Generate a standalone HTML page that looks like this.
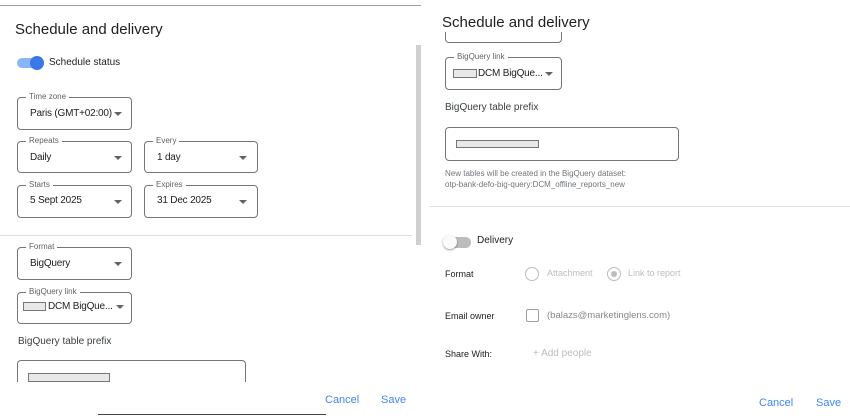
<!DOCTYPE html>
<html><head><meta charset="utf-8"><style>
body{margin:0;width:850px;height:419px;background:#fff;position:relative;overflow:hidden;font-family:"Liberation Sans",Arial,sans-serif;color:#202124}
.a{position:absolute;white-space:nowrap}
.box{position:absolute;border:1px solid #757575;border-radius:4px;box-sizing:border-box}
.lbl{position:absolute;top:-6px;left:8px;background:#fff;padding:0 3px;font-size:8px;color:#5f6368;line-height:10px}
.val{position:absolute;left:12px;font-size:10px;line-height:12px;letter-spacing:-0.2px}
.arr{position:absolute;width:0;height:0;border-left:4px solid transparent;border-right:4px solid transparent;border-top:4px solid #5f6368}
.t{font-size:15px;color:#202124}
.s{font-size:10px}
.g{position:absolute;background:#e8e8e8;border:1px solid #777;box-sizing:border-box}
.btn{font-size:11px;color:#4285f4}
</style></head><body>
<!-- left panel -->
<div class="a" style="left:0;top:5px;width:421px;height:1px;background:#9e9e9e"></div>
<div class="a t" style="left:15px;top:21px">Schedule and delivery</div>
<div class="a" style="left:416px;top:45px;width:5px;height:200px;background:#d0d0d0"></div>
<div class="a" style="left:17px;top:58px;width:25px;height:10px;border-radius:5px;background:#8ab4f8"></div>
<div class="a" style="left:30px;top:56px;width:14px;height:14px;border-radius:50%;background:#3b78e7"></div>
<div class="a s" style="left:49px;top:57px">Schedule status</div>

<div class="box" style="left:17px;top:97px;width:115px;height:33px"><span class="lbl">Time zone</span><span class="val" style="top:10px">Paris (GMT+02:00)</span><span class="arr" style="left:96px;top:14px"></span></div>
<div class="box" style="left:17px;top:141px;width:115px;height:32px"><span class="lbl">Repeats</span><span class="val" style="top:10px">Daily</span><span class="arr" style="left:96px;top:14px"></span></div>
<div class="box" style="left:144px;top:141px;width:114px;height:32px"><span class="lbl">Every</span><span class="val" style="top:10px">1 day</span><span class="arr" style="left:94px;top:14px"></span></div>
<div class="box" style="left:17px;top:185px;width:115px;height:33px"><span class="lbl">Starts</span><span class="val" style="top:9px">5 Sept 2025</span><span class="arr" style="left:96px;top:14px"></span></div>
<div class="box" style="left:144px;top:185px;width:114px;height:33px"><span class="lbl">Expires</span><span class="val" style="top:9px">31 Dec 2025</span><span class="arr" style="left:94px;top:14px"></span></div>
<div class="a" style="left:0;top:235px;width:412px;height:1px;background:#ddd"></div>
<div class="box" style="left:17px;top:247px;width:115px;height:33px"><span class="lbl">Format</span><span class="val" style="top:10px">BigQuery</span><span class="arr" style="left:96px;top:14px"></span></div>
<div class="box" style="left:17px;top:292px;width:115px;height:32px"><span class="lbl">BigQuery link</span><span class="g" style="left:5px;top:9px;width:23px;height:9px"></span><span class="val" style="left:30px;top:8px">DCM BigQue...</span><span class="arr" style="left:98px;top:12px"></span></div>
<div class="a s" style="left:18px;top:336px;color:#3c4043">BigQuery table prefix</div>
<div class="a" style="left:17px;top:360px;width:229px;height:22px;border:1px solid #757575;border-bottom:none;border-radius:4px 4px 0 0;box-sizing:border-box"></div>
<div class="g" style="left:28px;top:373px;width:82px;height:9px"></div>
<div class="a btn" style="left:325px;top:394px">Cancel</div>
<div class="a btn" style="left:381px;top:394px">Save</div>
<div class="a" style="left:98px;top:414px;width:228px;height:1px;background:#444"></div>

<!-- right panel -->
<div class="a t" style="left:442px;top:14px">Schedule and delivery</div>
<div class="a" style="left:445px;top:32px;width:117px;height:11px;border:1px solid #757575;border-top:none;border-radius:0 0 4px 4px;box-sizing:border-box"></div>
<div class="box" style="left:445px;top:57px;width:117px;height:33px"><span class="lbl">BigQuery link</span><span class="g" style="left:7px;top:11px;width:24px;height:9px"></span><span class="val" style="left:32px;top:10px">DCM BigQue...</span><span class="arr" style="left:99px;top:14px"></span></div>
<div class="a s" style="left:445px;top:102px;color:#3c4043">BigQuery table prefix</div>
<div class="box" style="left:445px;top:127px;width:234px;height:34px"></div>
<div class="g" style="left:456px;top:140px;width:83px;height:8px"></div>
<div class="a" style="left:445px;top:168px;font-size:8px;line-height:11px;color:#70757a">New tables will be created in the BigQuery dataset:<br>otp-bank-defo-big-query:DCM_offline_reports_new</div>
<div class="a" style="left:429px;top:206px;width:421px;height:1px;background:#e0e0e0"></div>
<div class="a" style="left:444px;top:237px;width:27px;height:11px;border-radius:6px;background:#bdbdbd"></div>
<div class="a" style="left:443px;top:235px;width:14px;height:14px;border-radius:50%;background:#fafafa;box-shadow:0 1px 2px rgba(0,0,0,.4)"></div>
<div class="a s" style="left:477px;top:235px">Delivery</div>
<div class="a" style="left:445px;top:269px;font-size:9px">Format</div>
<div class="a" style="left:525px;top:267px;width:14px;height:14px;border:1.5px solid #bdbdbd;border-radius:50%;box-sizing:border-box"></div>
<div class="a" style="left:547px;top:268px;font-size:9px;color:#bdbdbd">Attachment</div>
<div class="a" style="left:607px;top:267px;width:14px;height:14px;border:1.5px solid #bdbdbd;border-radius:50%;box-sizing:border-box"></div>
<div class="a" style="left:611px;top:271px;width:6px;height:6px;border-radius:50%;background:#bdbdbd"></div>
<div class="a" style="left:628px;top:268px;font-size:9px;color:#bdbdbd">Link to report</div>
<div class="a" style="left:445px;top:311px;font-size:9px">Email owner</div>
<div class="a" style="left:526px;top:309px;width:13px;height:13px;border:1.5px solid #9e9e9e;border-radius:2px;box-sizing:border-box"></div>
<div class="a" style="left:547px;top:310px;font-size:9.5px;color:#888">(balazs@marketinglens.com)</div>
<div class="a" style="left:445px;top:349px;font-size:9px">Share With:</div>
<div class="a" style="left:533px;top:348px;font-size:10px;color:#bdbdbd">+ Add people</div>
<div class="a btn" style="left:759px;top:397px">Cancel</div>
<div class="a btn" style="left:816px;top:397px">Save</div>
</body></html>
